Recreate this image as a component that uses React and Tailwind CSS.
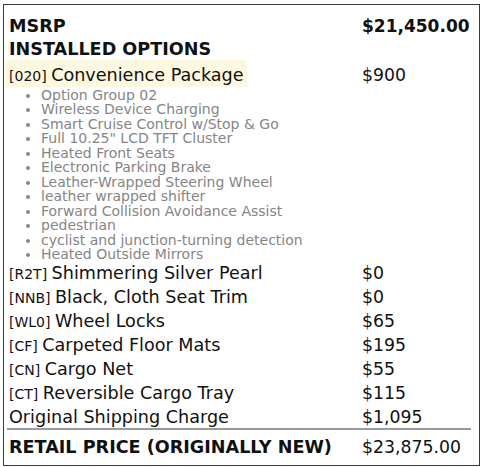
const options = [
  "Option Group 02",
  "Wireless Device Charging",
  "Smart Cruise Control w/Stop & Go",
  'Full 10.25" LCD TFT Cluster',
  "Heated Front Seats",
  "Electronic Parking Brake",
  "Leather-Wrapped Steering Wheel",
  "leather wrapped shifter",
  "Forward Collision Avoidance Assist",
  "pedestrian",
  "cyclist and junction-turning detection",
  "Heated Outside Mirrors",
];

const extras = [
  { code: "R2T", name: "Shimmering Silver Pearl", price: "$0" },
  { code: "NNB", name: "Black, Cloth Seat Trim", price: "$0" },
  { code: "WL0", name: "Wheel Locks", price: "$65" },
  { code: "CF", name: "Carpeted Floor Mats", price: "$195" },
  { code: "CN", name: "Cargo Net", price: "$55" },
  { code: "CT", name: "Reversible Cargo Tray", price: "$115" },
];

function Row({ left, right }) {
  return (
    <div className="grid grid-cols-[355px_1fr] h-[24px] leading-[24px]">
      <div className="pl-[2px] whitespace-nowrap text-[17.6px]">{left}</div>
      <div className="whitespace-nowrap">{right}</div>
    </div>
  );
}

function Code({ children }) {
  return <span className="text-[14px] leading-[1]">[{children}] </span>;
}

export default function App() {
  return (
    <div className="bg-white w-[483px] h-[467px] pl-[3px] pt-[4px] font-['DejaVu_Sans',sans-serif] text-[17.3px] text-[#111]">
      <div className="w-[477px] h-[462px] border border-[#3a3a3a] pl-[3px] pr-[8px] pt-[10px]">
        <div className="grid grid-cols-[355px_1fr] font-bold leading-[23px]">
          <div className="pl-[2px] text-[17.6px]">MSRP</div>
          <div className="text-[17px]">$21,450.00</div>
        </div>
        <div className="font-bold leading-[23px] pl-[2px] text-[17.6px]">INSTALLED OPTIONS</div>

        <div className="grid grid-cols-[355px_1fr] mt-[-1px] h-[27px]">
          <div>
            <span className="inline-block h-[27px] bg-[#fdf9e1] pl-[2px] pr-[3px] pt-[5px] leading-[20px] -ml-[2px] whitespace-nowrap text-[17.6px]">
              <span className="pl-[2px]"><Code>020</Code>Convenience Package</span>
            </span>
          </div>
          <div className="pt-[5px] leading-[20px]">$900</div>
        </div>

        <ul className="list-disc pl-[34px] mt-[1px] text-[14px] leading-[14.45px] text-[#858585] marker:text-[#8a8a8a]">
          {options.map((o) => (
            <li key={o}>{o}</li>
          ))}
        </ul>

        {extras.map((e) => (
          <Row
            key={e.code}
            left={
              <>
                <Code>{e.code}</Code>
                {e.name}
              </>
            }
            right={e.price}
          />
        ))}
        <Row left="Original Shipping Charge" right="$1,095" />

        <div className="h-[2px] bg-[#9a9a9a] -mt-[1px]" />

        <div className="grid grid-cols-[355px_1fr] leading-[24px] pt-[5px]">
          <div className="pl-[2px] font-bold whitespace-nowrap text-[17.6px]">RETAIL PRICE (ORIGINALLY NEW)</div>
          <div>$23,875.00</div>
        </div>
      </div>
    </div>
  );
}
